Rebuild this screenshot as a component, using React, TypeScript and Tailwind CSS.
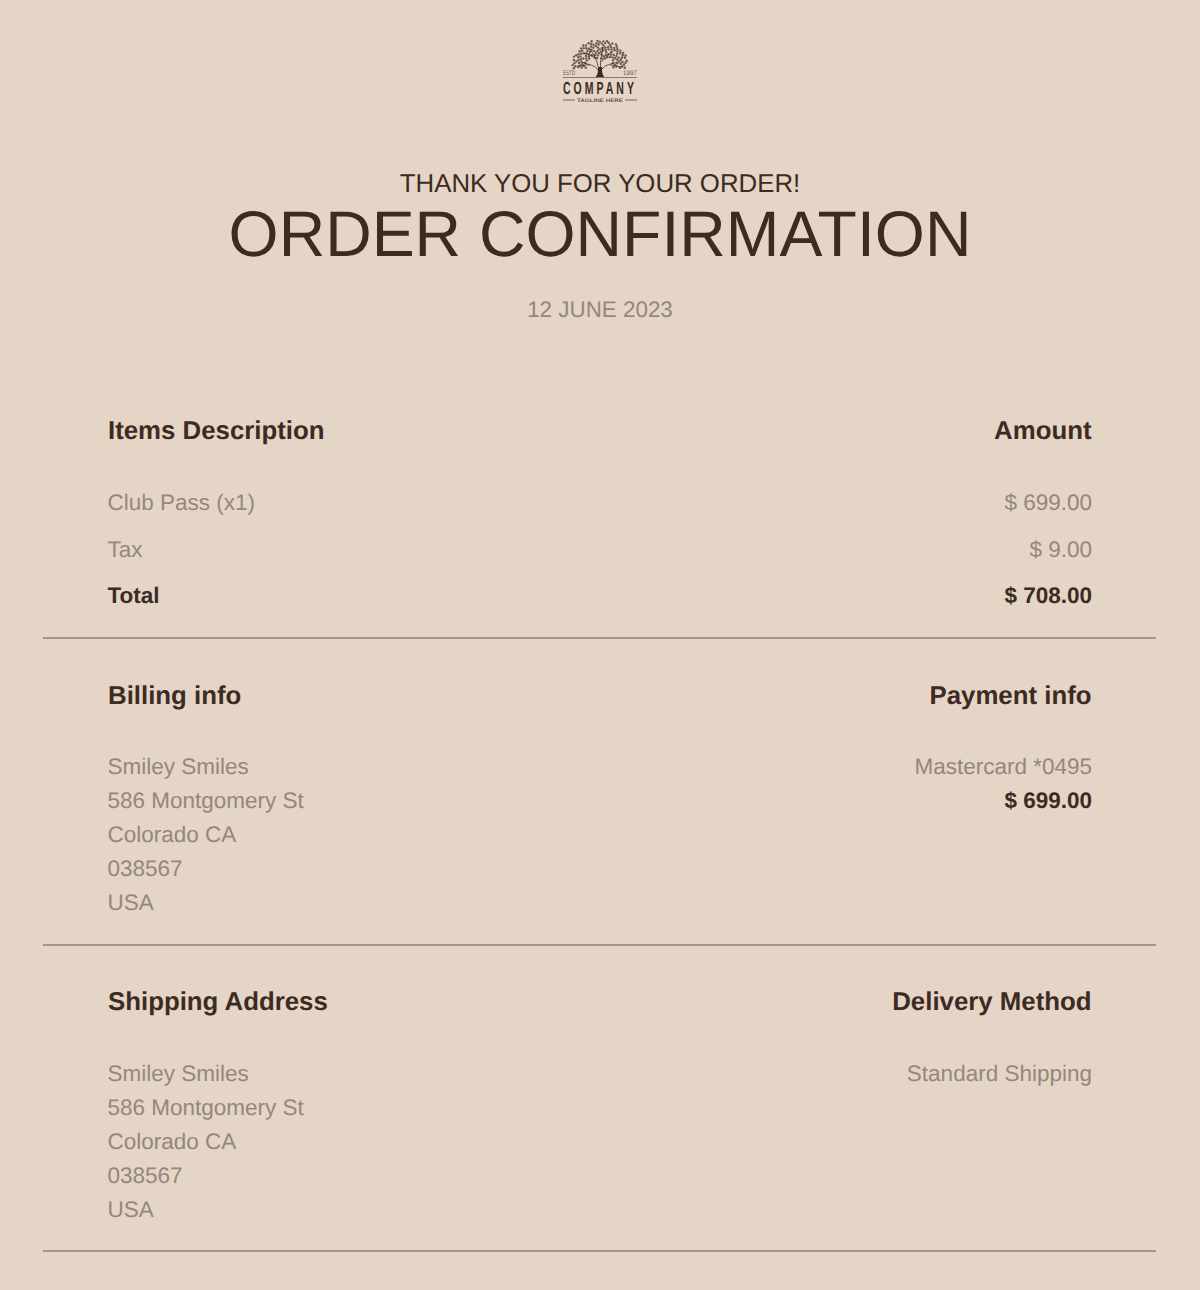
const font = { fontFamily: '"Liberation Sans", Arial, sans-serif' };
const logoFont = "'Liberation Sans', sans-serif";

const leaves: [number, number][] = [];
for (let i = 0; i < 320; i++) {
  const r = Math.sqrt((i + 0.5) / 320);
  const a = i * 2.39996;
  const u = r * Math.cos(a);
  const v = r * Math.sin(a);
  if (v > 0.14) continue;
  if (Math.abs(u) < 0.45 && v > -0.24) continue;
  if (i % 6 === 0) continue;
  leaves.push([38 + 28 * u, 25 + 25 * v]);
}

function Logo() {
  return (
    <svg width="76" height="64" viewBox="0 0 76 64" className="block">
      <g fill="#3d2b23" fillOpacity="0.72">
        {leaves.map(([x, y], i) => (
          <circle key={i} cx={x} cy={y} r={1.2} />
        ))}
      </g>
      <path d="M36 30 C33 25 27 25 20 22 M28 25 C24 24 20 26 15 26 M36.5 28 C35 20 32 15 28 9 M33 18 C30 16 26 14 22 13 M38.5 28 C38 20 40 13 41 7 M39.5 22 C42 18 46 15 49 12 M40 29 C44 24 50 24 56 22 M48 25 C52 25 56 27 61 27" stroke="#3d2b23" strokeWidth="0.9" strokeOpacity="0.85" fill="none" />
      <path d="M33.5 37 C35.5 35 36 33 36 27 L40 27 C40 33 40.5 35 42.5 37 Z" fill="#3d2b23" />
      <path d="M1 37.5 H75" stroke="#3d2b23" strokeOpacity="0.7" strokeWidth="0.8" />
      <text x="1" y="35" fontSize="6.6" fill="#3d2b23" fillOpacity="0.8" textLength="12" lengthAdjust="spacingAndGlyphs" fontFamily={logoFont}>ESTD</text>
      <text x="61" y="35" fontSize="6.6" fill="#3d2b23" fillOpacity="0.8" textLength="14" lengthAdjust="spacingAndGlyphs" fontFamily={logoFont}>1997</text>
      <text transform="translate(1 54.3) scale(0.6 1)" fontSize="17.5" fontWeight="700" letterSpacing="5" fill="#3d2b23" fontFamily={logoFont}>COMPANY</text>
      <path d="M1 60 H13 M63 60 H75" stroke="#3d2b23" strokeOpacity="0.8" strokeWidth="0.8" />
      <text x="15" y="61.5" fontSize="5" fontWeight="700" fill="#3d2b23" fillOpacity="0.8" textLength="46" lengthAdjust="spacingAndGlyphs" fontFamily={logoFont}>TAGLINE HERE</text>
    </svg>
  );
}

function Section({ left, right, lTitle, rTitle, box, gap }: { left: React.ReactNode; right: React.ReactNode; lTitle: string; rTitle: string; box: string; gap: string }) {
  return (
    <section className={`border-b-2 border-[#a39687] pl-[64.5px] pr-[64px] ${box}`}>
      <div className="flex justify-between pl-[0.5px] pr-[0.5px]">
        <h2 className="text-[25.8px] leading-[34px] font-bold text-[#3d2b23]">{lTitle}</h2>
        <h2 className="text-[25.8px] leading-[34px] font-bold text-[#3d2b23]">{rTitle}</h2>
      </div>
      <div className={`flex justify-between text-[22.5px] leading-[34px] text-[#94877b] ${gap}`}>
        <div>{left}</div>
        <div className="text-right">{right}</div>
      </div>
    </section>
  );
}

const Addr = () => (
  <>
    <div>Smiley Smiles</div>
    <div>586 Montgomery St</div>
    <div>Colorado CA</div>
    <div>038567</div>
    <div>USA</div>
  </>
);

export default function App() {
  return (
    <div style={font} className="min-h-[1290px] bg-[#e4d5c6] pl-[43px] pr-[44px] pt-[40px] [text-rendering:geometricPrecision]">
      <div className="flex justify-center pl-[1px]">
        <Logo />
      </div>
      <div className="mt-[63px] pl-[1px] text-center text-[25.8px] leading-[34px] text-[#3d2b23]">THANK YOU FOR YOUR ORDER!</div>
      <h1 className="mt-[1px] pl-[1px] text-center text-[64.4px] leading-[64px] font-normal text-[#3d2b23]">ORDER CONFIRMATION</h1>
      <div className="mt-[28px] pl-[1px] text-center text-[22.4px] leading-[32px] text-[#94877b]">12 JUNE 2023</div>

      <section className="mt-[88px] h-[225px] border-b-2 border-[#a39687] pl-[64.5px] pr-[64px]">
        <div className="flex justify-between pl-[0.5px] pr-[0.5px]">
          <h2 className="text-[25.8px] leading-[34px] font-bold text-[#3d2b23]">Items Description</h2>
          <h2 className="text-[25.8px] leading-[34px] font-bold text-[#3d2b23]">Amount</h2>
        </div>
        <div className="mt-[38px] flex flex-col gap-[12.5px] text-[22.5px] leading-[34px] text-[#94877b]">
          <div className="flex justify-between"><span>Club Pass (x1)</span><span>$ 699.00</span></div>
          <div className="flex justify-between"><span>Tax</span><span>$ 9.00</span></div>
          <div className="flex justify-between font-bold text-[#3d2b23]"><span>Total</span><span>$ 708.00</span></div>
        </div>
      </section>

      <Section box="h-[307px] pt-[40px]" gap="mt-[37px]" lTitle="Billing info" rTitle="Payment info" left={<Addr />} right={<><div>Mastercard *0495</div><div className="font-bold text-[#3d2b23]">$ 699.00</div></>} />
      <Section box="h-[306px] pt-[39px]" gap="mt-[38px]" lTitle="Shipping Address" rTitle="Delivery Method" left={<Addr />} right={<div>Standard Shipping</div>} />
    </div>
  );
}
